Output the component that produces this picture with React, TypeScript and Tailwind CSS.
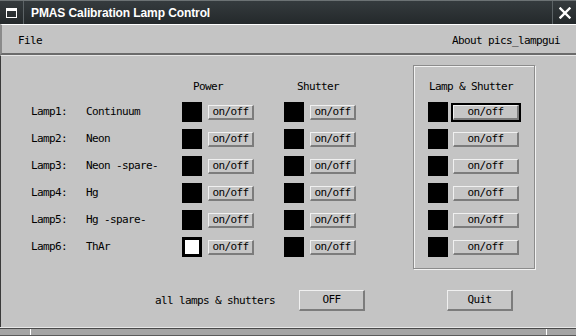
const MONO = "font-['DejaVu_Sans_Mono',monospace] text-[11px] tracking-[-0.62px]";

const lamps = [
  { id: "Lamp1:", name: "Continuum", power: false },
  { id: "Lamp2:", name: "Neon", power: false },
  { id: "Lamp3:", name: "Neon -spare-", power: false },
  { id: "Lamp4:", name: "Hg", power: false },
  { id: "Lamp5:", name: "Hg -spare-", power: false },
  { id: "Lamp6:", name: "ThAr", power: true },
];

function Indicator({ on }: { on?: boolean }) {
  return on ? (
    <div className="h-[20px] w-[20px] shrink-0 border-[3px] border-black bg-white" />
  ) : (
    <div className="h-[20px] w-[20px] shrink-0 bg-black" />
  );
}

function SmallButton() {
  return (
    <button
      type="button"
      className="flex h-[15px] w-[46px] items-end justify-center border-t border-l border-t-[#f0f0f0] border-l-[#f0f0f0] border-r-2 border-b-2 border-r-[#7c7c7c] border-b-[#7c7c7c] bg-[#c6c6c6] leading-[12px] text-black"
    >
      on/off
    </button>
  );
}

function WideButton({ focus }: { focus?: boolean }) {
  return (
    <button
      type="button"
      className={`flex h-[15px] w-[66px] items-center justify-center border-t border-l border-t-[#f0f0f0] border-l-[#f0f0f0] border-r-2 border-b-2 border-r-[#7c7c7c] border-b-[#7c7c7c] bg-[#c6c6c6] leading-[12px] text-black ${
        focus ? "outline-2 outline-black" : ""
      }`}
    >
      on/off
    </button>
  );
}

export default function App() {
  return (
    <div className={`flex h-[336px] w-[576px] flex-col overflow-hidden bg-[#c4c4c4] ${MONO}`}>
      {/* Title bar */}
      <div className="flex h-[24px] shrink-0 items-stretch border-t border-t-[#6c7274] bg-gradient-to-b from-[#353b3e] to-[#24292b]">
        <div className="flex w-[24px] items-center justify-center border-r border-r-[#5c6366]">
          <div className="h-[10px] w-[11px] border border-t-[3px] border-white" />
        </div>
        <div className="flex flex-1 items-center pl-[7px] font-['Liberation_Sans',sans-serif] text-[12px] font-bold tracking-[-0.1px] text-white">
          PMAS Calibration Lamp Control
        </div>
        <div className="flex w-[24px] items-center justify-center border-l border-l-[#5c6366]">
          <svg width="12" height="12" viewBox="0 0 12 12">
            <path d="M1.5 1.5 L10.5 10.5 M10.5 1.5 L1.5 10.5" stroke="white" strokeWidth="2.4" strokeLinecap="square" />
          </svg>
        </div>
      </div>

      {/* Menu bar */}
      <div className="flex h-[31px] shrink-0 items-center justify-between border-t border-l-2 border-b-2 border-t-white border-l-[#8a8a8a] border-b-[#6b6b6b] px-[16px] pt-[5px]">
        <span>File</span>
        <span>About pics_lampgui</span>
      </div>

      {/* Main area */}
      <div className="flex flex-1 flex-col border-t border-l border-t-[#e8e8e8] border-l-[#3a3a3a] pt-[9px]">
        <div className="flex items-start">
          {/* Lamp rows */}
          <div className="mt-[15px] flex flex-col pl-[30px]">
            <div className="flex h-[14px] items-center">
              <div className="w-[151px]" />
              <div className="w-[102px] pl-[11px]">Power</div>
              <div className="pl-[13px]">Shutter</div>
            </div>
            <div className="mt-[8px] flex flex-col gap-[7px]">
              {lamps.map((l) => (
                <div key={l.id} className="flex h-[20px] items-center">
                  <div className="w-[55px]">{l.id}</div>
                  <div className="w-[96px]">{l.name}</div>
                  <div className="flex w-[102px] items-center gap-[6px]">
                    <Indicator on={l.power} />
                    <SmallButton />
                  </div>
                  <div className="flex items-center gap-[6px]">
                    <Indicator />
                    <SmallButton />
                  </div>
                </div>
              ))}
            </div>
          </div>

          {/* Lamp & Shutter frame */}
          <div className="ml-[57px] flex w-[122px] flex-col border border-[#8c8c8c] pt-[14px] pb-[11px] pl-[14px] shadow-[inset_1px_1px_0_#f2f2f2,1px_1px_0_#f2f2f2]">
            <div className="flex h-[14px] items-center pl-[1px]">Lamp &amp; Shutter</div>
            <div className="mt-[8px] flex flex-col gap-[7px]">
              {lamps.map((l, i) => (
                <div key={l.id} className="flex h-[20px] items-center gap-[5px]">
                  <Indicator />
                  <WideButton focus={i === 0} />
                </div>
              ))}
            </div>
          </div>
        </div>

        {/* Bottom controls */}
        <div className="mt-[21px] flex h-[21px] items-center pl-[154px]">
          <span className="w-[144px] pt-[1px]">all lamps &amp; shutters</span>
          <button
            type="button"
            className="flex h-[21px] w-[66px] items-center justify-center border-t border-l border-t-[#f0f0f0] border-l-[#f0f0f0] border-r-2 border-b-2 border-r-[#7c7c7c] border-b-[#7c7c7c] bg-[#c6c6c6] text-black"
          >
            OFF
          </button>
          <button
            type="button"
            className="ml-[82px] flex h-[21px] w-[66px] items-center justify-center border-t border-l border-t-[#f0f0f0] border-l-[#f0f0f0] border-r-2 border-b-2 border-r-[#7c7c7c] border-b-[#7c7c7c] bg-[#c6c6c6] text-black"
          >
            Quit
          </button>
        </div>
      </div>

      {/* Bottom frame strip */}
      <div className="flex h-[9px] shrink-0 flex-col">
        <div className="h-[1px] bg-[#e8e8e8]" />
        <div className="h-[1px] bg-[#4a4a4a]" />
        <div className="flex flex-1 border-b border-b-[#5a5a5a] bg-[#a4a4a4]">
          <div className="w-[30px]" />
          <div className="w-[1px] bg-white" />
          <div className="w-[515px]" />
          <div className="w-[1px] bg-white" />
        </div>
      </div>
    </div>
  );
}
